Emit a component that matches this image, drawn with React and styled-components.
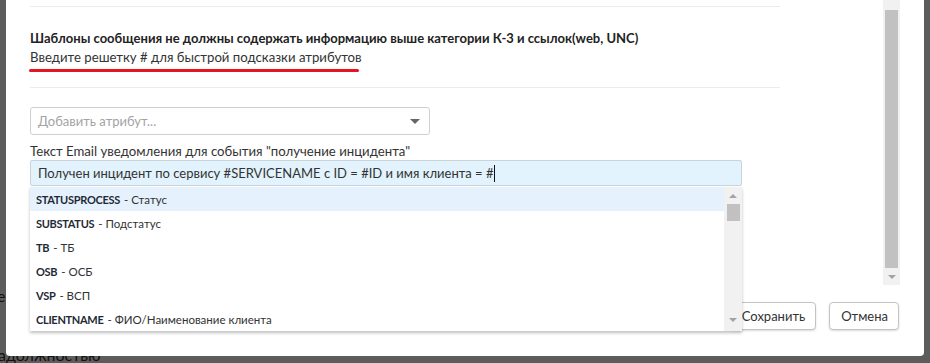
import React from 'react'
import styled, {createGlobalStyle} from 'styled-components'

const font = `Lato, "Open Sans", sans-serif`

const GlobalStyle = createGlobalStyle`
    html, body {
        margin: 0;
        padding: 0;
    }
    body {
        width: 930px;
        height: 363px;
        overflow: hidden;
        font-family: ${font};
        color: #333;
    }
`

const Page = styled.div`
    position: relative;
    width: 930px;
    height: 363px;
    overflow: hidden;
    background: #fff;
`

// page content lying under the modal backdrop
const UnderPage = styled.div`
    display: flex;
    flex-direction: column;
    padding-top: 285px;
    font-size: 16px;
    line-height: 21px;
    color: #333;
`

const UnderLine = styled.div`
    margin-top: ${({gap}) => gap || 0}px;
    margin-left: ${({shift}) => shift || 0}px;
`

const Backdrop = styled.div`
    position: absolute;
    inset: 0;
    background: rgba(0, 0, 0, 0.64);
`

const Modal = styled.div`
    position: absolute;
    left: 6px;
    top: -10px;
    width: 918px;
    height: 366px;
    background: #fff;
    border-radius: 4px;
    display: flex;
    flex-direction: column;
`

const Body = styled.div`
    display: flex;
    height: 295px;
    flex-shrink: 0;
`

const Content = styled.div`
    flex: 1;
    padding: 16px 0 0 24px;
    display: flex;
    flex-direction: column;
`

const Divider = styled.div`
    width: 750px;
    height: 1px;
    background: #ebebeb;
    margin-top: ${({top}) => top || 0}px;
`

const Notice = styled.div`
    margin-top: 22px;
    font-size: 13px;
    line-height: 19px;
`

const NoticeTitle = styled.div`
    font-weight: 700;
    color: #222;
`

const Hint = styled.div`
    display: inline-flex;
    flex-direction: column;
    align-items: flex-start;
    font-size: 13.2px;
`

const RedMark = styled.div`
    width: 330px;
    height: 3px;
    margin: 2px 0 0 -1px;
    border-radius: 2px;
    background: #e5141e;
`

const Select = styled.div`
    margin-top: 19px;
    height: 26px;
    border: 1px solid #cfcfcf;
    border-radius: 3px;
    display: flex;
    align-items: center;
    justify-content: space-between;
    padding: 0 9px 0 7px;
    width: 382px;
    font-size: 13px;
    color: #a3a3a3;
`

const Caret = styled.span`
    width: 0;
    height: 0;
    border-left: 5px solid transparent;
    border-right: 5px solid transparent;
    border-top: 5px solid #666;
`

const Label = styled.div`
    margin-top: 7px;
    font-size: 13.2px;
    line-height: 18px;
    color: #333;
`

const Field = styled.div`
    position: relative;
    margin-top: 0;
    width: 712px;
`

const Input = styled.div`
    height: 24px;
    border: 1px solid #c9d3da;
    border-radius: 2px;
    background: #e2f3fd;
    padding: 0 7px;
    display: flex;
    align-items: center;
    font-size: 13px;
    color: #333;
`

const Cursor = styled.span`
    display: inline-block;
    width: 1px;
    height: 17px;
    margin-left: 1px;
    background: #111;
`

const Dropdown = styled.div`
    position: absolute;
    top: 27px;
    left: 0;
    width: 712px;
    height: 144px;
    background: #fff;
    box-shadow: 0 2px 3px rgba(0, 0, 0, 0.25);
    display: flex;
    z-index: 5;
`

const Options = styled.div`
    flex: 1;
    display: flex;
    flex-direction: column;
`

const Option = styled.div`
    height: 24px;
    display: flex;
    align-items: center;
    padding-left: 6px;
    font-size: 11.5px;
    color: #333;
    background: ${({active}) => active ? '#e5f2fd' : '#fff'};

    b {
        color: #1f2a36;
        font-size: 11px;
        font-weight: 700;
        letter-spacing: -0.3px;
        margin-right: 4px;
    }
`

const Scrollbar = styled.div`
    width: ${({w}) => w || 17}px;
    background: #f1f1f1;
    display: flex;
    flex-direction: column;
    align-items: center;
    margin: ${({m}) => m || 0};
`

const Thumb = styled.div`
    width: ${({w}) => w || 13}px;
    height: ${({h}) => h}px;
    margin-top: ${({top}) => top || 0}px;
    background: #c1c1c1;
`

const Arrow = styled.span`
    width: 0;
    height: 0;
    border-left: 4px solid transparent;
    border-right: 4px solid transparent;
    ${({up}) => up ? 'border-bottom: 4px solid #a3a3a3;' : 'border-top: 4px solid #a3a3a3;'}
    margin-top: ${({top}) => top || 0}px;
`

const Footer = styled.div`
    display: flex;
    justify-content: flex-end;
    align-items: flex-start;
    gap: 13px;
    padding: 17px 25px 0 0;
`

const Button = styled.button`
    height: 28px;
    padding: 0 10px 0 11px;
    border: 1px solid #c4c4c4;
    border-radius: 4px;
    background: #fff;
    box-shadow: 0 1px 2px rgba(0, 0, 0, 0.15);
    font-family: ${font};
    font-size: 13px;
    color: #333;
`

const options = [
    {key: 'STATUSPROCESS', text: 'Статус'},
    {key: 'SUBSTATUS', text: 'Подстатус'},
    {key: 'TB', text: 'ТБ'},
    {key: 'OSB', text: 'ОСБ'},
    {key: 'VSP', text: 'ВСП'},
    {key: 'CLIENTNAME', text: 'ФИО/Наименование клиента'},
]

export default function App() {
    return (
        <Page>
            <GlobalStyle />
            <UnderPage>
                <UnderLine shift={-3}>ер</UnderLine>
                <UnderLine gap={38} shift={-2}>адолжностью</UnderLine>
            </UnderPage>
            <Backdrop />
            <Modal>
                <Body>
                    <Content>
                        <Divider />
                        <Notice>
                            <NoticeTitle>
                                Шаблоны сообщения не должны содержать информацию выше категории К-3 и ссылок(web, UNC)
                            </NoticeTitle>
                            <Hint>
                                Введите решетку # для быстрой подсказки атрибутов
                                <RedMark />
                            </Hint>
                        </Notice>
                        <Divider top={15} />
                        <Select>
                            Добавить атрибут...
                            <Caret />
                        </Select>
                        <Label>Текст Email уведомления для события "получение инцидента"</Label>
                        <Field>
                            <Input>
                                Получен инцидент по сервису #SERVICENAME с ID = #ID и имя клиента = #
                                <Cursor />
                            </Input>
                            <Dropdown>
                                <Options>
                                    {options.map((o, i) => (
                                        <Option key={o.key} active={i === 0}>
                                            <b>{o.key}</b> - {o.text}
                                        </Option>
                                    ))}
                                </Options>
                                <Scrollbar w={18}>
                                    <Arrow up top={7} />
                                    <Thumb top={6} h={17} />
                                    <Arrow top={97} />
                                </Scrollbar>
                            </Dropdown>
                        </Field>
                    </Content>
                    <Scrollbar m="0 24px 0 0">
                        <Thumb top={20} h={258} />
                        <Arrow top={7} />
                    </Scrollbar>
                </Body>
                <Footer>
                    <Button>Сохранить</Button>
                    <Button>Отмена</Button>
                </Footer>
            </Modal>
        </Page>
    )
}
